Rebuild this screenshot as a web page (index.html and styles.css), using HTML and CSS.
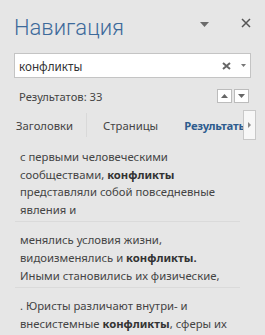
FILE: index.html
```html
<!DOCTYPE html>
<html lang="ru">
<head>
  <meta charset="UTF-8">
  <title>Навигация</title>
  <link rel="stylesheet" href="styles.css">
</head>
<body>
  <div class="pane">
    <header class="pane-head">
      <span class="pane-title">Навигация</span>
      <span class="pane-menu">
        <svg width="9" height="5" viewBox="0 0 9 5"><path d="M0 0h9L4.5 5z" fill="#6b6b6b"/></svg>
      </span>
      <span class="pane-close">
        <svg width="10" height="10" viewBox="0 0 10 10"><path d="M1 1l8 8M9 1l-8 8" stroke="#555" stroke-width="1.5"/></svg>
      </span>
    </header>

    <div class="search">
      <span class="search-text">конфликты</span>
      <span class="search-clear">
        <svg width="9" height="8" viewBox="0 0 9 8"><path d="M1 1l7 6M8 1l-7 6" stroke="#666" stroke-width="2"/></svg>
      </span>
      <span class="search-drop">
        <svg width="5" height="3" viewBox="0 0 5 3"><path d="M0 0h5L2.5 3z" fill="#777"/></svg>
      </span>
    </div>

    <div class="count-row">
      <span class="count">Результатов: 33</span>
      <span class="nav-btns">
        <span class="nav-btn"><svg width="7" height="4" viewBox="0 0 7 4"><path d="M0 4h7L3.5 0z" fill="#666"/></svg></span>
        <span class="nav-btn"><svg width="7" height="4" viewBox="0 0 7 4"><path d="M0 0h7L3.5 4z" fill="#666"/></svg></span>
      </span>
    </div>

    <nav class="tabs">
      <span class="tab">Заголовки</span>
      <span class="tab-sep"></span>
      <span class="tab">Страницы</span>
      <span class="tab active">Результаты</span>
      <span class="tab-more"><svg width="3" height="6" viewBox="0 0 3 6"><path d="M0 0v6l3-3z" fill="#888"/></svg></span>
    </nav>

    <ul class="results">
      <li>с первыми человеческими сообществами, <b>конфликты</b> представляли собой повседневные явления и</li>
      <li>менялись условия жизни, видоизменялись и <b>конфликты.</b> Иными становились их физические,</li>
      <li>. Юристы различают внутри- и внесистемные <b>конфликты</b>, сферы их проявления, в том числе семейно - бытовые</li>
    </ul>
  </div>
</body>
</html>
```

FILE: styles.css
```css
body {
  margin: 0;
  background-color: #e6e6e6;
  font-family: "Noto Sans", "Open Sans", sans-serif;
  color: #444;
  overflow: hidden;
}

.pane {
  width: 265px;
  height: 335px;
  overflow: hidden;
}

.pane-head {
  display: flex;
  align-items: center;
  height: 46px;
  padding: 0 14px 0 14px;
}

.pane-title {
  flex: 1;
  font-family: Roboto, "Noto Sans", sans-serif;
  font-weight: 300;
  font-size: 22px;
  color: #3d6a9b;
  padding-top: 8px;
}

.pane-menu {
  display: flex;
  margin-right: 32px;
  padding-top: 2px;
}

.pane-close {
  display: flex;
}

.search {
  display: flex;
  align-items: center;
  height: 23px;
  margin: 7px 14px 0 14px;
  padding: 0 4px 0 4px;
  background-color: #fff;
  border: 1px solid #c4c4c4;
}

.search-text {
  flex: 1;
  font-size: 11.7px;
  color: #333;
}

.search-clear {
  display: flex;
  margin-right: 10px;
}

.search-drop {
  display: flex;
}

.count-row {
  display: flex;
  align-items: center;
  height: 20px;
  margin-top: 8px;
  padding: 0 16px 0 19px;
}

.count {
  flex: 1;
  font-size: 11.2px;
  color: #444;
}

.nav-btns {
  display: flex;
  gap: 2px;
}

.nav-btn {
  display: flex;
  align-items: center;
  justify-content: center;
  width: 13px;
  height: 12px;
  background-color: #fff;
  border: 1px solid #bcbcbc;
}

.tabs {
  display: flex;
  align-items: center;
  height: 30px;
  margin-top: 4px;
  padding-left: 16px;
  white-space: nowrap;
  position: relative;
}

.tab {
  font-size: 11.3px;
  color: #444;
}

.tab-sep {
  width: 1px;
  height: 24px;
  background-color: #d9d9d9;
  margin: 0 16px 0 13px;
}

.tab + .tab {
  margin-left: 26px;
}

.tab.active {
  font-weight: bold;
  color: #2e5c8e;
  letter-spacing: -0.2px;
}

.tab-more {
  position: absolute;
  left: 243px;
  top: 0;
  width: 13px;
  height: 30px;
  display: flex;
  align-items: center;
  justify-content: center;
  background-color: #f7f7f7;
  border: 1px solid #c8c8c8;
  box-sizing: border-box;
}

.results {
  list-style: none;
  margin: 8px 0 0 0;
  padding: 0 25px 0 15px;
}

.results li {
  font-size: 11.3px;
  line-height: 17.6px;
  padding: 0 12px 3px 5px;
  margin-bottom: 9px;
  border-bottom: 1px solid #dadada;
}

.results b {
  color: #333;
}
```
